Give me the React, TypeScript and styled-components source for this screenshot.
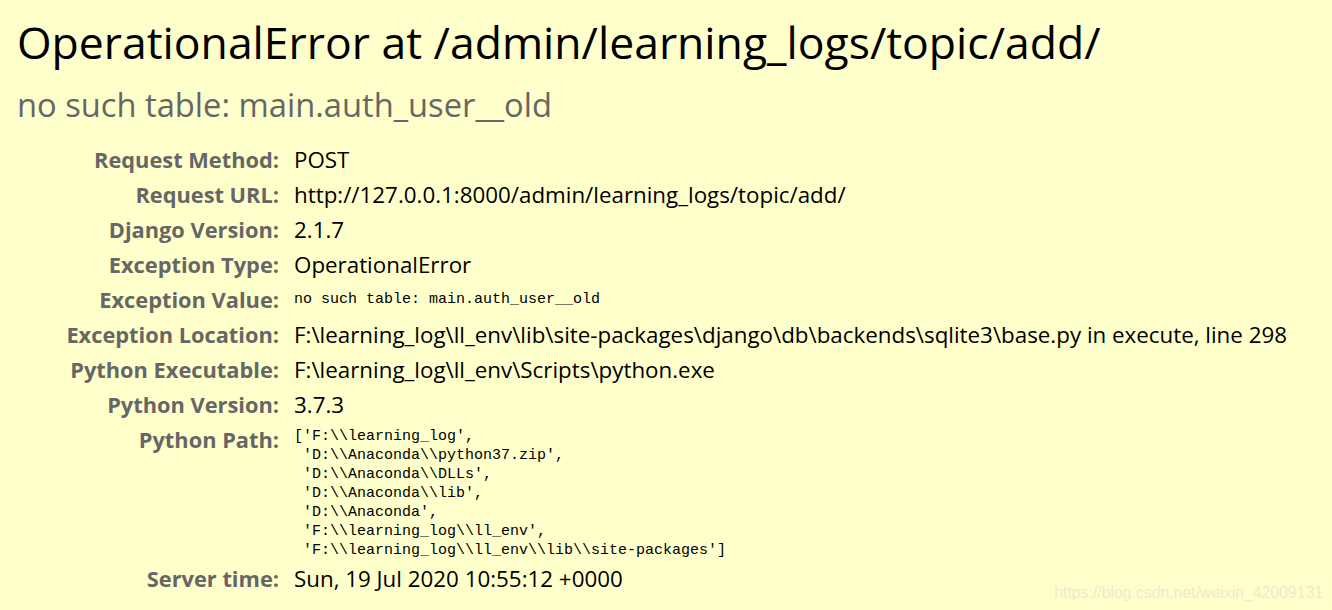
import React from "react";
import styled, { createGlobalStyle } from "styled-components";

const Global = createGlobalStyle`
  html, body { margin: 0; padding: 0; background: #ffffcc; }
  body { font-family: "Open Sans", "Noto Sans", sans-serif; }
`;

const Page = styled.div`
  width: 1332px;
  height: 610px;
  box-sizing: border-box;
  padding: 15px 0 0 17px;
  background: #ffffcc;
  position: relative;
  overflow: hidden;
`;

const Title = styled.h1`
  margin: 0;
  font-weight: normal;
  font-size: 44.5px;
  line-height: 54px;
  color: #000;
`;

const Subtitle = styled.div`
  margin: 14px 0 0 0;
  font-size: 32.7px;
  line-height: 44px;
  color: #666;
`;

const Meta = styled.div`
  display: grid;
  grid-template-columns: 262px 1fr;
  column-gap: 15px;
  margin-top: 15px;
`;

const Label = styled.div`
  text-align: right;
  font-weight: bold;
  font-size: 21.8px;
  line-height: 35px;
  color: #666;
  white-space: nowrap;
`;

const Value = styled.div`
  font-size: 22.35px;
  line-height: 35px;
  color: #000;
  white-space: nowrap;
`;

const Mono = styled.pre<{ $multi?: boolean }>`
  margin: 0;
  padding: ${(p) => (p.$multi ? "5px 0 1px" : "0")};
  font-family: "Liberation Mono", "DejaVu Sans Mono", monospace;
  font-size: 15px;
  line-height: ${(p) => (p.$multi ? "19px" : "35px")};
  color: #000;
  white-space: pre;
`;

const Watermark = styled.div`
  position: absolute;
  right: 9px;
  bottom: 8px;
  font-family: "Liberation Sans", Arial, sans-serif;
  font-size: 15.8px;
  color: #ebebcb;
`;

const rows: [string, React.ReactNode][] = [
  ["Request Method:", <Value>POST</Value>],
  ["Request URL:", <Value>http://127.0.0.1:8000/admin/learning_logs/topic/add/</Value>],
  ["Django Version:", <Value>2.1.7</Value>],
  ["Exception Type:", <Value>OperationalError</Value>],
  ["Exception Value:", <Mono>no such table: main.auth_user__old</Mono>],
  [
    "Exception Location:",
    <Value>F:\learning_log\ll_env\lib\site-packages\django\db\backends\sqlite3\base.py in execute, line 298</Value>,
  ],
  ["Python Executable:", <Value>F:\learning_log\ll_env\Scripts\python.exe</Value>],
  ["Python Version:", <Value>3.7.3</Value>],
  [
    "Python Path:",
    <Mono $multi>{`['F:\\\\learning_log',
 'D:\\\\Anaconda\\\\python37.zip',
 'D:\\\\Anaconda\\\\DLLs',
 'D:\\\\Anaconda\\\\lib',
 'D:\\\\Anaconda',
 'F:\\\\learning_log\\\\ll_env',
 'F:\\\\learning_log\\\\ll_env\\\\lib\\\\site-packages']`}</Mono>,
  ],
  ["Server time:", <Value>Sun, 19 Jul 2020 10:55:12 +0000</Value>],
];

export default function App() {
  return (
    <Page>
      <Global />
      <Title>OperationalError at /admin/learning_logs/topic/add/</Title>
      <Subtitle>no such table: main.auth_user__old</Subtitle>
      <Meta>
        {rows.map(([k, v]) => (
          <React.Fragment key={k}>
            <Label>{k}</Label>
            {v}
          </React.Fragment>
        ))}
      </Meta>
      <Watermark>https://blog.csdn.net/weixin_42009131</Watermark>
    </Page>
  );
}
